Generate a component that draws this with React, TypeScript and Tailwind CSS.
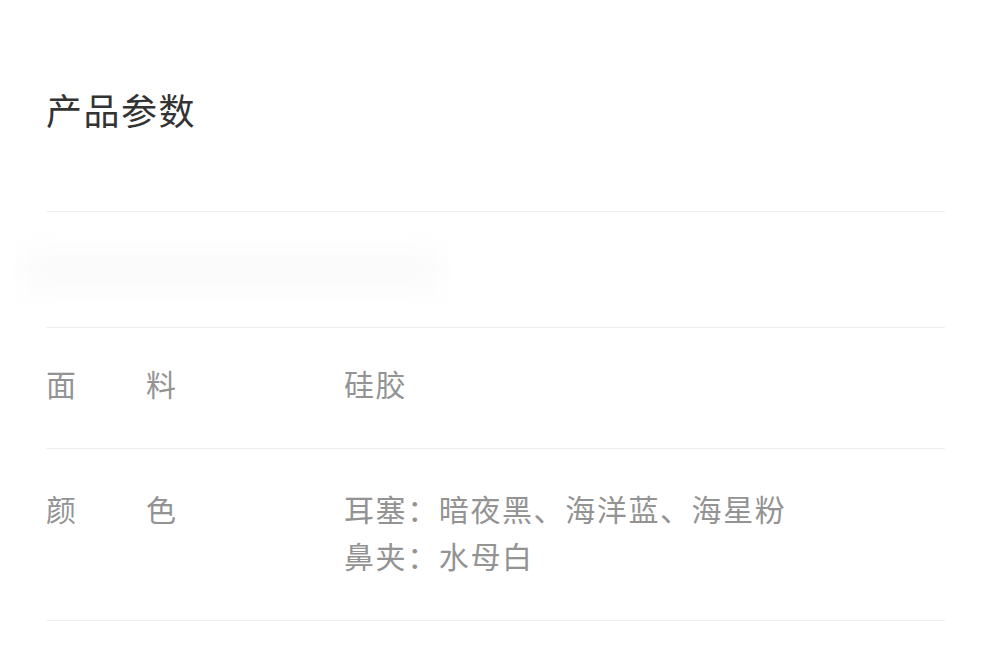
import React from "react";

const font = "font-['Noto_Sans_CJK_SC','Noto_Sans',sans-serif]";

const Label: React.FC<{ a: string; b: string }> = ({ a, b }) => (
  <div className="flex w-[298px] shrink-0">
    <span className="w-[100px]">{a}</span>
    <span>{b}</span>
  </div>
);

export default function App() {
  return (
    <div className={`w-[990px] h-[647px] bg-white overflow-hidden ${font}`}>
      <div className="pl-[46px] pr-[45px]">
        <h1 className="pt-[85px] h-[211px] text-[36px] leading-[48px] text-[#333] tracking-[1.5px]">
          产品参数
        </h1>
        <div className="border-t border-[#efefef]" />
        <div className="h-[115px] flex items-center -ml-[24px]">
          <div className="w-[420px] h-[44px] bg-[#fbfbfb] blur-md rounded" />
        </div>
        <div className="border-t border-[#efefef]" />
        <div className="h-[120px] flex items-center text-[30px] tracking-[1.6px] text-[#939393] pb-[9px]">
          <Label a="面" b="料" />
          <span>硅胶</span>
        </div>
        <div className="border-t border-[#efefef]" />
        <div className="h-[171px] flex items-start pt-[36px] text-[30px] tracking-[1.6px] leading-[47px] text-[#939393]">
          <Label a="颜" b="色" />
          <div className="flex flex-col">
            <span>耳塞：暗夜黑、海洋蓝、海星粉</span>
            <span>鼻夹：水母白</span>
          </div>
        </div>
        <div className="border-t border-[#efefef]" />
      </div>
    </div>
  );
}
